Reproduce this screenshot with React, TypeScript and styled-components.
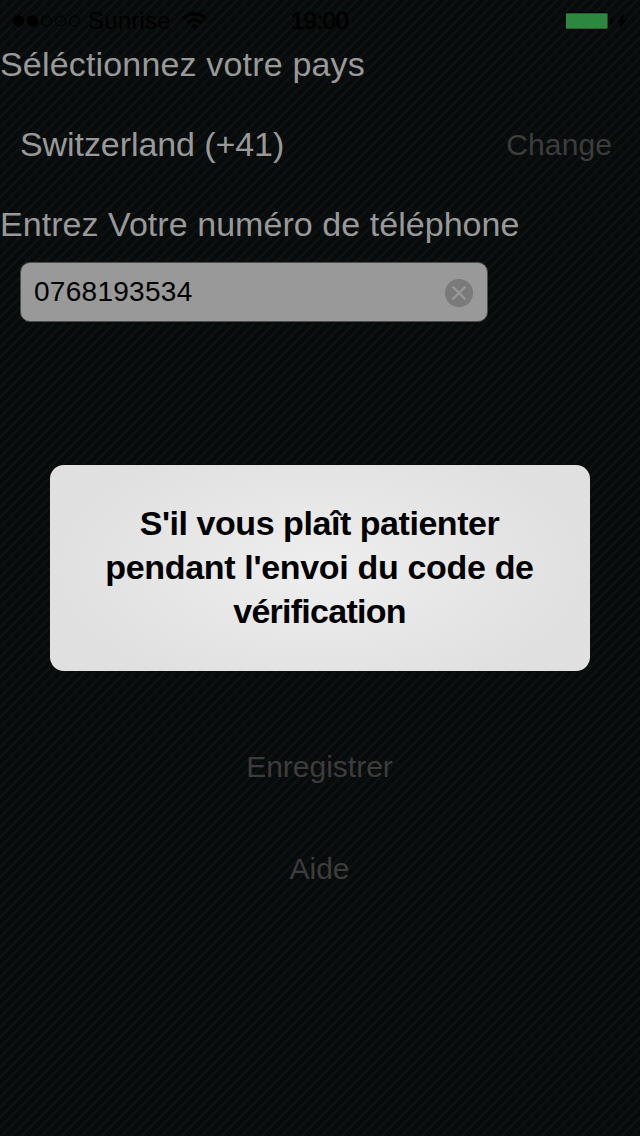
import React from "react";
import styled, { createGlobalStyle } from "styled-components";

const GlobalStyle = createGlobalStyle`
  body { margin: 0; background: #090a0a; }
  * { box-sizing: border-box; }
`;

const Screen = styled.div`
  position: relative;
  width: 640px;
  height: 1136px;
  overflow: hidden;
  display: flex;
  flex-direction: column;
  font-family: "Liberation Sans", Arial, sans-serif;
  color: #999;
  background: repeating-linear-gradient(
    135deg,
    #090a0a 0px,
    #090a0a 3.6px,
    #0a1517 5px,
    #0a1517 5.5px,
    #090a0a 6.9px,
    #090a0a 7.071px
  );
`;

const StatusBar = styled.header`
  display: grid;
  grid-template-columns: 1fr auto 1fr;
  align-items: center;
  height: 40px;
  padding: 1px 12px 0 13px;
  font-size: 24px;
  line-height: 39px;
  color: #000;
`;

const Carrier = styled.div`
  display: flex;
  align-items: center;
`;

const CarrierName = styled.span`
  margin: 0 11px 0 6px;
  letter-spacing: 0.2px;
`;

const Clock = styled.span`
  padding-right: 2px;
  letter-spacing: -0.5px;
  -webkit-text-stroke: 0.7px #000;
`;

const Power = styled.div`
  display: flex;
  justify-content: flex-end;
`;

const Form = styled.main`
  display: flex;
  flex-direction: column;
`;

const Heading = styled.h1<{ $tracking: number }>`
  margin: 0;
  font-size: 34px;
  font-weight: 400;
  line-height: 48px;
  letter-spacing: ${(p) => p.$tracking}px;
`;

const CountryRow = styled.div`
  display: flex;
  justify-content: space-between;
  align-items: center;
  height: 112px;
  padding: 0 28px 0 20px;
  font-size: 34px;
  letter-spacing: -0.08px;
`;

const TextButton = styled.button`
  border: 0;
  padding: 0;
  background: none;
  font: 30px/40px "Liberation Sans", Arial, sans-serif;
  color: #3c3c3c;
`;

const ChangeButton = styled(TextButton)`
  padding-top: 2px;
  letter-spacing: 0.1px;
`;

const PhoneField = styled.div`
  display: flex;
  align-items: center;
  justify-content: space-between;
  width: 468px;
  height: 60px;
  margin: 14px 0 0 20px;
  padding: 1px 14px 0 13px;
  border: 1px solid #4c4e4e;
  border-radius: 10px;
  background: #999;
  color: #000;
  font-size: 28px;
  letter-spacing: 0.28px;
`;

const PhoneNumber = styled.span`
  padding-bottom: 1px;
`;

const Actions = styled.nav`
  display: flex;
  flex-direction: column;
  align-items: center;
  gap: 62px;
  margin-top: 425px;
  padding-right: 1px;
`;

const Alert = styled.div`
  position: absolute;
  left: 50px;
  top: 465px;
  width: 540px;
  height: 206px;
  padding: 36px 31px 36px 30px;
  border-radius: 14px;
  background: radial-gradient(ellipse 270px 135px at 50% 50%, #eee, #e0e0e0);
  color: #000;
  text-align: center;
  font-size: 34px;
  font-weight: 700;
  line-height: 44px;
`;

const AlertLine = styled.div<{ $tracking: number }>`
  letter-spacing: ${(p) => p.$tracking}px;
`;

const Signal = () => (
  <svg width="69" height="14" viewBox="0 0 69 14">
    <circle cx="5.5" cy="7" r="5.7" />
    <circle cx="19.5" cy="7" r="5.7" />
    {[33.5, 47.5, 61.5].map((x) => (
      <circle key={x} cx={x} cy="7" r="5" fill="none" stroke="#000" strokeWidth="1" />
    ))}
  </svg>
);

const Wifi = () => (
  <svg width="25" height="18" viewBox="0 0 25 18" fill="none" stroke="#000" strokeWidth="3.2">
    <path d="M1.2 6.6a16 16 0 0 1 22.6 0" />
    <path d="M5.4 11a10 10 0 0 1 14.2 0" />
    <path d="M12.5 17.8 8.6 13.9a5.5 5.5 0 0 1 7.8 0z" fill="#000" stroke="none" />
  </svg>
);

const Battery = () => (
  <svg width="65" height="20" viewBox="0 0 65 20">
    <rect x="1.5" y="1" width="44" height="18" rx="2.5" />
    <rect x="2.8" y="2.2" width="41.8" height="15.6" rx="0.8" fill="#2e873e" />
    <path d="M47.5 6.5c3 .7 3 6.3 0 7z" />
    <path d="M61.5 2 54 11h4.2l-2.1 7 8.2-9.5h-4.6z" />
  </svg>
);

const ClearIcon = () => (
  <svg width="28" height="28" viewBox="0 0 28 28">
    <circle cx="14" cy="14" r="14" fill="#7a7a7a" />
    <path d="M7.5 7.5l13 13M20.5 7.5l-13 13" stroke="#999" strokeWidth="2.2" />
  </svg>
);

export default function App() {
  return (
    <>
      <GlobalStyle />
      <Screen>
        <StatusBar>
          <Carrier>
            <Signal />
            <CarrierName>Sunrise</CarrierName>
            <Wifi />
          </Carrier>
          <Clock>19:00</Clock>
          <Power>
            <Battery />
          </Power>
        </StatusBar>
        <Form>
          <Heading $tracking={0.17}>Séléctionnez votre pays</Heading>
          <CountryRow>
            <span>Switzerland (+41)</span>
            <ChangeButton>Change</ChangeButton>
          </CountryRow>
          <Heading $tracking={0.05}>Entrez Votre numéro de téléphone</Heading>
          <PhoneField>
            <PhoneNumber>0768193534</PhoneNumber>
            <ClearIcon />
          </PhoneField>
          <Actions>
            <TextButton>Enregistrer</TextButton>
            <TextButton>Aide</TextButton>
          </Actions>
        </Form>
        <Alert role="alertdialog">
          <AlertLine $tracking={-0.45}>S'il vous plaît patienter</AlertLine>
          <AlertLine $tracking={-0.33}>pendant l'envoi du code de</AlertLine>
          <AlertLine $tracking={-0.75}>vérification</AlertLine>
        </Alert>
      </Screen>
    </>
  );
}
